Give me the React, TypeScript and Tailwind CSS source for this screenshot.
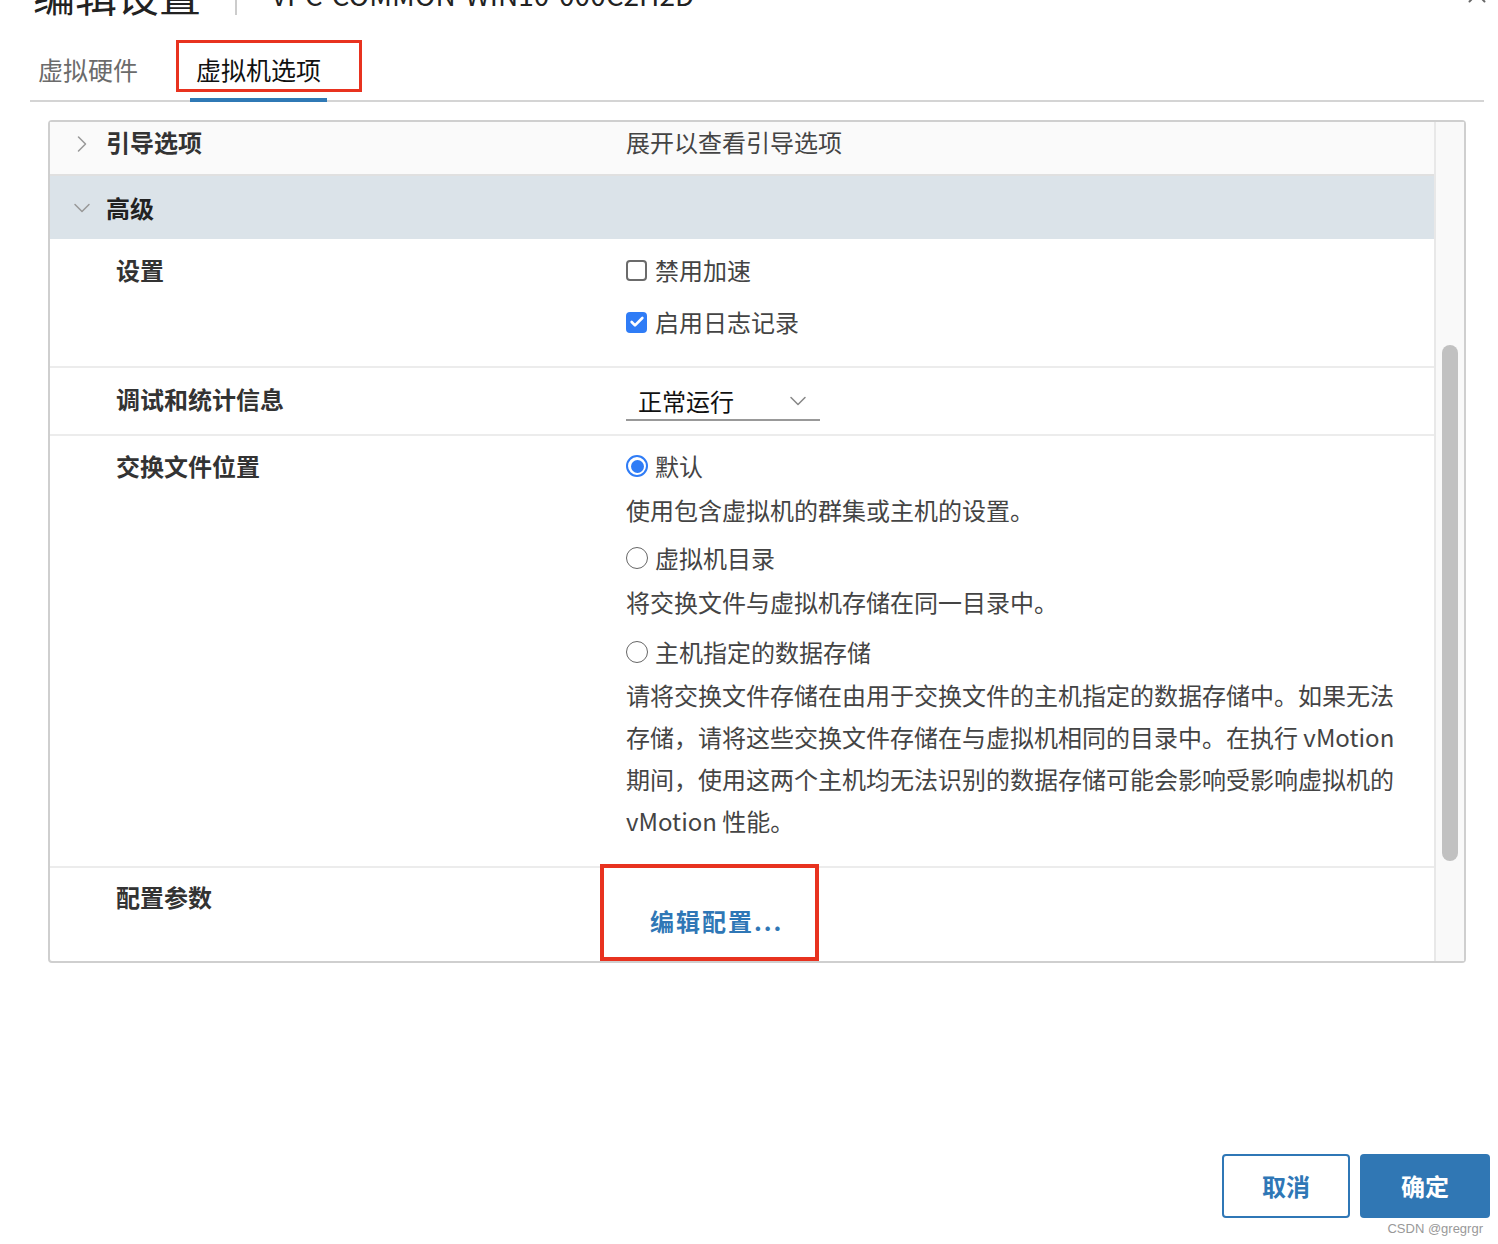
import { ChevronDown, ChevronRight, X, Check } from "lucide-react";

const font = { fontFamily: '"Noto Sans CJK SC", "Noto Sans", sans-serif' };

function CheckBox({ checked, label }: { checked?: boolean; label: string }) {
  return (
    <div className="flex h-[32px] items-center gap-[8px]">
      {checked ? (
        <span className="flex size-[21px] items-center justify-center rounded-[4px] bg-[#2f7cf6]">
          <Check className="size-[16px] text-white" strokeWidth={4} />
        </span>
      ) : (
        <span className="size-[21px] rounded-[4px] border-2 border-[#6b6b6b]" />
      )}
      <span className="text-[24px] text-[#444]">{label}</span>
    </div>
  );
}

function Radio({ checked, label }: { checked?: boolean; label: string }) {
  return (
    <div className="flex h-[32px] items-center gap-[7px]">
      {checked ? (
        <span className="flex size-[22px] items-center justify-center rounded-full border-2 border-[#2f7cf6]">
          <span className="size-[13px] rounded-full bg-[#2f7cf6]" />
        </span>
      ) : (
        <span className="size-[22px] rounded-full border-[1.5px] border-[#666]" />
      )}
      <span className="text-[24px] text-[#444]">{label}</span>
    </div>
  );
}

export default function App() {
  return (
    <div className="relative h-[1244px] w-[1498px] overflow-hidden bg-white" style={font}>
      {/* header, mostly scrolled off the top */}
      <div className="-mt-[30px] flex h-[48px] items-center pl-[33px]">
        <span className="text-[42px] leading-none text-[#222]">编辑设置</span>
        <span className="ml-[34px] h-[42px] w-[2px] bg-[#ccc]" />
        <span className="ml-[34px] text-[28px] leading-none text-[#222]">
          VPC-COMMON-WIN10-000C2H2D
        </span>
        <X className="ml-auto mr-[6px] size-[30px] text-[#666]" strokeWidth={1.5} />
      </div>

      {/* tabs */}
      <div className="ml-[30px] mr-[14px] mt-[26px] flex h-[58px] items-end border-b-2 border-[#d4d4d4]">
        <div className="flex h-full items-center px-[8px] pb-[4px] text-[25px] text-[#6b6b6b]">虚拟硬件</div>
        <div className="relative ml-[44px] flex h-full items-center px-[6px] pb-[4px] text-[25px] text-[#111]">
          虚拟机选项
          <span className="absolute -bottom-[2px] left-0 right-0 h-[4px] bg-[#2f79b5]" />
        </div>
      </div>

      {/* panel */}
      <div className="ml-[48px] mt-[18px] flex w-[1418px] rounded-[4px] border-2 border-[#cfcfcf]">
        <div className="flex-1">
          <div className="flex h-[54px] items-start border-b-2 border-[#e0e0e0] bg-[#fafafa] pt-[5px]">
            <ChevronRight className="ml-[18px] mt-[3px] size-[28px] text-[#999]" strokeWidth={1.3} />
            <span className="ml-[10px] w-[520px] text-[24px] font-semibold leading-[30px] text-[#333]">引导选项</span>
            <span className="text-[24px] leading-[30px] text-[#444]">展开以查看引导选项</span>
          </div>
          <div className="flex h-[63px] items-center bg-[#dbe3e9]">
            <ChevronDown className="ml-[18px] size-[28px] text-[#999]" strokeWidth={1.3} />
            <span className="ml-[10px] text-[24px] font-semibold text-[#222]">高级</span>
          </div>

          <div className="flex h-[129px] border-b-2 border-[#ececec] pt-[15px]">
            <div className="w-[576px] pl-[66px] text-[24px] font-semibold leading-[32px] text-[#333]">设置</div>
            <div className="flex flex-col gap-[20px]">
              <CheckBox label="禁用加速" />
              <CheckBox checked label="启用日志记录" />
            </div>
          </div>

          <div className="flex h-[68px] items-start border-b-2 border-[#ececec] pt-[15px]">
            <div className="w-[576px] pl-[66px] text-[24px] font-semibold leading-[32px] text-[#333]">调试和统计信息</div>
            <div className="flex h-[38px] w-[194px] items-center border-b-2 border-[#999] pl-[12px] pr-[8px]">
              <span className="text-[24px] text-[#111]">正常运行</span>
              <ChevronDown className="ml-auto size-[28px] text-[#888]" strokeWidth={1.3} />
            </div>
          </div>

          <div className="flex h-[432px] border-b-2 border-[#ececec] pt-[14px]">
            <div className="w-[576px] pl-[66px] text-[24px] font-semibold leading-[32px] text-[#333]">交换文件位置</div>
            <div className="flex flex-col text-[24px] text-[#444]">
              <Radio checked label="默认" />
              <div className="mt-[12px] leading-[32px]">使用包含虚拟机的群集或主机的设置。</div>
              <div className="mt-[16px]"><Radio label="虚拟机目录" /></div>
              <div className="mt-[12px] leading-[32px]">将交换文件与虚拟机存储在同一目录中。</div>
              <div className="mt-[18px]"><Radio label="主机指定的数据存储" /></div>
              <div className="mt-[6px] leading-[42px]">
                请将交换文件存储在由用于交换文件的主机指定的数据存储中。如果无法
                <br />
                存储，请将这些交换文件存储在与虚拟机相同的目录中。在执行 vMotion
                <br />
                期间，使用这两个主机均无法识别的数据存储可能会影响受影响虚拟机的
                <br />
                vMotion 性能。
              </div>
            </div>
          </div>

          <div className="flex h-[93px] pt-[13px]">
            <div className="w-[600px] pl-[66px] text-[24px] font-semibold leading-[32px] text-[#333]">配置参数</div>
            <div className="mt-[22px] text-[24px] font-semibold tracking-[2px] text-[#2f77b6]">编辑配置...</div>
          </div>
        </div>

        <div className="w-[30px] border-l-2 border-[#e8e8e8] bg-[#f9f9f9] pt-[223px]">
          <div className="ml-[6px] h-[516px] w-[16px] rounded-full bg-[#c1c1c1]" />
        </div>
      </div>

      {/* footer */}
      <div className="mt-[191px] flex justify-end gap-[10px] pr-[8px]">
        <button className="flex h-[64px] w-[128px] items-center justify-center rounded-[4px] border-2 border-[#2f77b6] text-[24px] font-bold text-[#2f77b6]">
          取消
        </button>
        <button className="flex h-[64px] w-[130px] items-center justify-center rounded-[4px] bg-[#3077b4] text-[24px] font-bold text-white">
          确定
        </button>
      </div>

      <div className="absolute right-[15px] top-[1219px] text-[13px] text-[#999]" style={{ fontFamily: '"Liberation Sans", sans-serif' }}>
        CSDN @gregrgr
      </div>

      {/* annotation boxes */}
      <div className="absolute left-[176px] top-[40px] h-[52px] w-[186px] border-[3px] border-[#e8321f]" />
      <div className="absolute left-[600px] top-[864px] h-[97px] w-[219px] border-4 border-[#e8321f]" />
    </div>
  );
}
